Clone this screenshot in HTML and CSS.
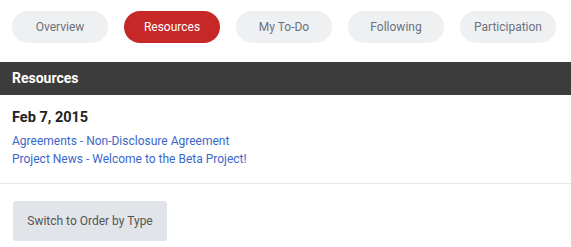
FILE: index.html
```html
<!DOCTYPE html>
<html lang="en">
  <head>
    <meta charset="UTF-8" />
    <title>Resources</title>
    <link rel="stylesheet" href="styles.css">
  </head>
  <body>
    <div class="tabs">
      <a class="tab">Overview</a>
      <a class="tab active">Resources</a>
      <a class="tab">My To-Do</a>
      <a class="tab">Following</a>
      <a class="tab">Participation</a>
    </div>

    <div class="panel-title">Resources</div>

    <div class="group">
      <div class="date">Feb 7, 2015</div>
      <a class="item" href="#">Agreements - Non-Disclosure Agreement</a>
      <a class="item" href="#">Project News - Welcome to the Beta Project!</a>
    </div>

    <div class="actions">
      <button class="switch">Switch to Order by Type</button>
    </div>
  </body>
</html>
```

FILE: styles.css
```css
* {
  box-sizing: border-box;
}
body {
  margin: 0;
  font-family: Roboto, 'Liberation Sans', sans-serif;
  background: #fff;
  color: #333;
}
.tabs {
  display: flex;
  gap: 16px;
  padding: 11px 12px 19px;
}
.tab {
  width: 96px;
  height: 32px;
  line-height: 33px;
  border-radius: 16px;
  background: #eff0f2;
  color: #6b7280;
  font-size: 12px;
  text-align: center;
}
.tab.active {
  background: #c62828;
  color: #fff;
}
.panel-title {
  background: #3c3c3c;
  color: #fff;
  font-size: 14px;
  font-weight: bold;
  height: 33px;
  line-height: 33px;
  padding: 0 12px;
}
.group {
  padding: 13px 12px 15px;
  border-bottom: 1px solid #e8e8e8;
}
.date {
  font-size: 14.5px;
  font-weight: bold;
  color: #222;
  line-height: 20px;
  margin-bottom: 4px;
}
.item {
  display: block;
  font-size: 12px;
  line-height: 18px;
  color: #3a67c9;
  text-decoration: none;
}
.actions {
  padding: 17px 13px;
}
.switch {
  width: 154px;
  height: 40px;
  border: none;
  border-radius: 3px;
  background: #e1e4e8;
  color: #555;
  font-family: Roboto, 'Liberation Sans', sans-serif;
  font-size: 12px;
  padding: 0;
}
```
